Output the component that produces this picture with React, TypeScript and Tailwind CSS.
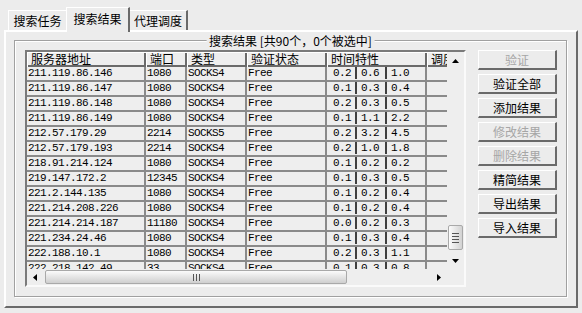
import React from "react";

// result rows: ip, port, type, status, t1, t2, t3
const rows: string[][] = [
  ["211.119.86.146", "1080", "SOCKS4", "Free", "0.2", "0.6", "1.0"],
  ["211.119.86.147", "1080", "SOCKS4", "Free", "0.1", "0.3", "0.4"],
  ["211.119.86.148", "1080", "SOCKS4", "Free", "0.2", "0.3", "0.5"],
  ["211.119.86.149", "1080", "SOCKS4", "Free", "0.1", "1.1", "2.2"],
  ["212.57.179.29", "2214", "SOCKS5", "Free", "0.2", "3.2", "4.5"],
  ["212.57.179.193", "2214", "SOCKS4", "Free", "0.2", "1.0", "1.8"],
  ["218.91.214.124", "1080", "SOCKS4", "Free", "0.1", "0.2", "0.2"],
  ["219.147.172.2", "12345", "SOCKS4", "Free", "0.1", "0.3", "0.5"],
  ["221.2.144.135", "1080", "SOCKS4", "Free", "0.1", "0.2", "0.4"],
  ["221.214.208.226", "1080", "SOCKS4", "Free", "0.1", "0.2", "0.4"],
  ["221.214.214.187", "11180", "SOCKS4", "Free", "0.0", "0.2", "0.3"],
  ["221.234.24.46", "1080", "SOCKS4", "Free", "0.1", "0.3", "0.4"],
  ["222.188.10.1", "1080", "SOCKS4", "Free", "0.2", "0.3", "1.1"],
  ["222.218.142.49", "33", "SOCKS4", "Free", "0.1", "0.3", "0.8"],
];

const buttons: { label: string; disabled?: boolean }[] = [
  { label: "验证", disabled: true },
  { label: "验证全部" },
  { label: "添加结果" },
  { label: "修改结果", disabled: true },
  { label: "删除结果", disabled: true },
  { label: "精简结果" },
  { label: "导出结果" },
  { label: "导入结果" },
];

const cjk = "font-['Noto_Sans_CJK_SC',sans-serif] text-[12px]";
const mono = "font-['Liberation_Mono','Noto_Sans_CJK_SC',monospace] text-[11px] tracking-[-0.6px]";
// raised header cells, drawn with inset shadows so the text box keeps the full row height
const headCell =
  "h-[15px] shrink-0 shadow-[inset_1px_1px_0_#ffffff,inset_-2px_-2px_0_#6a6a6a] pl-[4px] leading-[14px] whitespace-nowrap";
const cell = "h-[15px] shrink-0 border-r-2 border-b-2 border-[#8a8a8a] leading-[13px] whitespace-nowrap";

const Arrow = ({ dir }: { dir: "up" | "down" | "left" | "right" }) => {
  const pts = {
    up: "0,4 3.5,0 7,4",
    down: "0,0 7,0 3.5,4",
    left: "4,0 4,7 0,3.5",
    right: "0,0 0,7 4,3.5",
  }[dir];
  const vertical = dir === "up" || dir === "down";
  return (
    <svg width={vertical ? 7 : 4} height={vertical ? 4 : 7} viewBox={vertical ? "0 0 7 4" : "0 0 4 7"}>
      <polygon points={pts} fill="#000" />
    </svg>
  );
};

const Tab = ({ label, active, first }: { label: string; active?: boolean; first?: boolean }) => (
  <div
    className={`${cjk} flex items-start justify-center bg-[#ececec] border-t border-t-white ${
      first ? "border-l border-l-white" : ""
    } ${
      active
        ? "relative z-10 w-[64px] h-[25px] pt-[3px] border-l border-l-white border-r-2 border-r-[#6a6a6a]"
        : "w-[58px] h-[20px] mt-[3px] pt-[2px]"
    } ${!active && !first ? "border-r-2 border-r-[#6a6a6a]" : ""} leading-[15px] text-black`}
  >
    {label}
  </div>
);

export default function App() {
  return (
    <div className="w-[582px] h-[313px] bg-[#ececec] pt-[7px] px-[4px] overflow-hidden">
      {/* tab strip */}
      <div className="flex h-[23px] pl-[4px]">
        <Tab label="搜索任务" first />
        <Tab label="搜索结果" active />
        <Tab label="代理调度" />
      </div>

      {/* tab panel */}
      <div className="h-[278px] border-2 border-t-white border-l-white border-r-[#6a6a6a] border-b-[#6a6a6a] pt-[8px] pl-[8px] pr-[9px] pb-[9px]">
        <div className="relative h-full border border-[#a0a0a0] shadow-[inset_1px_1px_0_#ffffff,1px_1px_0_#ffffff] pt-[9px] pl-[10px] flex gap-[12px]">
          <div
            className={`${cjk} absolute left-1/2 top-0 -translate-x-1/2 -translate-y-1/2 px-[3px] bg-[#ececec] leading-[14px] whitespace-nowrap text-black`}
          >
            搜索结果 [共90个，0个被选中]
          </div>

          {/* result table */}
          <div className="w-[441px] h-[237px] border-2 border-t-[#7a7a7a] border-l-[#7a7a7a] border-r-[#fafafa] border-b-[#fafafa] flex bg-[#eeeeee]">
            <div className="w-[420px] flex flex-col">
              <div className="h-[217px] overflow-hidden">
                <div className={`flex ${cjk} text-black`}>
                  <div className={`${headCell} w-[119px]`}>服务器地址</div>
                  <div className={`${headCell} w-[41px]`}>端口</div>
                  <div className={`${headCell} w-[60px]`}>类型</div>
                  <div className={`${headCell} w-[80px]`}>验证状态</div>
                  <div className={`${headCell} w-[100px]`}>时间特性</div>
                  <div className={`${headCell} w-[60px]`}>调度</div>
                </div>
                {rows.map((r) => (
                  <div key={r[0]} className={`flex ${mono} text-black`}>
                    <div className={`${cell} w-[119px] pl-[1px]`}>{r[0]}</div>
                    <div className={`${cell} w-[41px] pl-[1px]`}>{r[1]}</div>
                    <div className={`${cell} w-[60px] pl-[1px]`}>{r[2]}</div>
                    <div className={`${cell} w-[80px] pl-[1px]`}>{r[3]}</div>
                    <div className={`${cell} w-[100px] flex`}>
                      <span className="w-[30px] h-[12px] pl-[6px] border-r-2 border-[#404040]">{r[4]}</span>
                      <span className="w-[30px] h-[12px] pl-[4px] border-r-2 border-[#404040]">{r[5]}</span>
                      <span className="pl-[4px]">{r[6]}</span>
                    </div>
                    <div className={`${cell} w-[60px]`}></div>
                  </div>
                ))}
              </div>

              {/* horizontal scrollbar */}
              <div className="h-[16px] flex items-center">
                <div className="w-[16px] h-full flex items-center justify-center">
                  <Arrow dir="left" />
                </div>
                <div className="flex-1 h-full flex items-center pl-[2px]">
                  <div className="w-[302px] h-[14px] rounded-[2px] border border-[#a9a9a9] bg-linear-to-b from-[#fbfbfb] to-[#cfcfcf] flex items-center justify-center gap-[2px]">
                    <span className="w-px h-[7px] bg-[#555]" />
                    <span className="w-px h-[7px] bg-[#555]" />
                    <span className="w-px h-[7px] bg-[#555]" />
                  </div>
                </div>
                <div className="w-[16px] h-full flex items-center justify-center">
                  <Arrow dir="right" />
                </div>
              </div>
            </div>

            {/* vertical scrollbar */}
            <div className="w-[17px] flex flex-col">
              <div className="h-[217px] flex flex-col items-center">
                <div className="h-[17px] w-full flex items-center justify-center">
                  <Arrow dir="up" />
                </div>
                <div className="flex-1 w-full flex flex-col items-center pt-[156px]">
                  <div className="w-[15px] h-[25px] rounded-[2px] border border-[#a9a9a9] bg-linear-to-r from-[#fbfbfb] to-[#d2d2d2] flex flex-col items-center justify-center gap-[2px]">
                    <span className="w-[7px] h-px bg-[#555]" />
                    <span className="w-[7px] h-px bg-[#555]" />
                    <span className="w-[7px] h-px bg-[#555]" />
                    <span className="w-[7px] h-px bg-[#555]" />
                  </div>
                </div>
                <div className="h-[16px] w-full flex items-center justify-center">
                  <Arrow dir="down" />
                </div>
              </div>
              <div className="h-[16px]" />
            </div>
          </div>

          {/* action buttons */}
          <div className="flex flex-col gap-[4px]">
            {buttons.map((b) => (
              <div
                key={b.label}
                className={`${cjk} w-[79px] h-[20px] flex items-center justify-center border-t border-l border-r-2 border-b-2 border-t-white border-l-white border-r-[#6a6a6a] border-b-[#6a6a6a] leading-[14px] ${
                  b.disabled ? "text-[#a6a6a6]" : "text-black"
                }`}
              >
                {b.label}
              </div>
            ))}
          </div>
        </div>
      </div>
    </div>
  );
}
